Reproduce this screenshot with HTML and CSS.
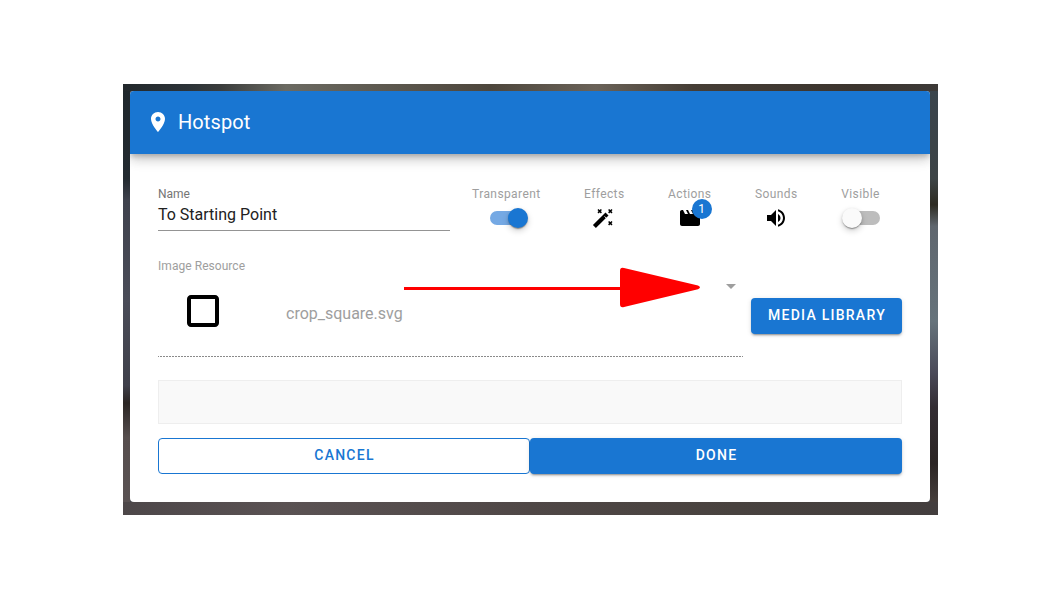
FILE: index.html
```html
<!DOCTYPE html>
<html lang="en">
<head>
<meta charset="utf-8">
<title>Hotspot</title>
<link rel="stylesheet" href="styles.css">
</head>
<body>
<div class="backdrop">
  <div class="dialog">
    <header class="header">
      <svg class="pin" viewBox="0 0 24 24"><path d="M12 2C8.13 2 5 5.13 5 9c0 5.25 7 13 7 13s7-7.75 7-13c0-3.87-3.13-7-7-7zm0 9.5c-1.38 0-2.5-1.12-2.5-2.5s1.12-2.5 2.5-2.5 2.5 1.12 2.5 2.5-1.12 2.5-2.5 2.5z"/></svg>
      <h1 class="title">Hotspot</h1>
    </header>
    <div class="body">
      <div class="top-row">
        <div class="name-field">
          <div class="name-label">Name</div>
          <div class="name-value">To Starting Point</div>
        </div>
        <div class="options">
          <div class="option">
            <div class="option-label">Transparent</div>
            <div class="option-control"><span class="toggle toggle-on"><span class="thumb"></span></span></div>
          </div>
          <div class="option">
            <div class="option-label">Effects</div>
            <div class="option-control">
              <svg class="icon" viewBox="0 0 24 24">
                <path d="M2.4 20.6 L15 8" class="wand"/>
                <path d="M12.6 10.4 L14.6 12.4" class="wand-gap"/>
                <path d="M6 3.5l3.4 3.4M9.4 3.5L6 6.9M16.6 3.5l3.4 3.4M20 3.5l-3.4 3.4M16.6 15.5l3.4 3.4M20 15.5l-3.4 3.4" class="spark"/>
              </svg>
            </div>
          </div>
          <div class="option">
            <div class="option-label">Actions</div>
            <div class="option-control">
              <span class="icon-wrap">
                <svg class="icon" viewBox="0 0 24 24"><path d="M18 4l2 4h-3l-2-4h-2l2 4h-3l-2-4H8l2 4H7L5 4H4c-1.1 0-1.99.9-1.99 2L2 18c0 1.1.9 2 2 2h16c1.1 0 2-.9 2-2V4h-4z"/></svg>
                <span class="badge">1</span>
              </span>
            </div>
          </div>
          <div class="option">
            <div class="option-label">Sounds</div>
            <div class="option-control">
              <svg class="icon" viewBox="0 0 24 24"><path d="M3 9v6h4l5 5V4L7 9H3zm13.5 3c0-1.77-1.02-3.29-2.5-4.03v8.05c1.48-.73 2.5-2.25 2.5-4.02zM14 3.23v2.06c2.89.86 5 3.54 5 6.71s-2.11 5.85-5 6.71v2.06c4.01-.91 7-4.49 7-8.77s-2.99-7.86-7-8.77z"/></svg>
            </div>
          </div>
          <div class="option">
            <div class="option-label">Visible</div>
            <div class="option-control"><span class="toggle"><span class="thumb"></span></span></div>
          </div>
        </div>
      </div>
      <div class="resource-row">
        <div class="resource">
          <div class="resource-label">Image Resource</div>
          <div class="resource-value">
            <div class="preview">
              <svg class="preview-icon" viewBox="0 0 24 24"><path d="M18 4H6c-1.1 0-2 .9-2 2v12c0 1.1.9 2 2 2h12c1.1 0 2-.9 2-2V6c0-1.1-.9-2-2-2zm0 14H6V6h12v12z"/></svg>
            </div>
            <div class="file-name">crop_square.svg</div>
          </div>
          <span class="caret"></span>
        </div>
        <button class="btn btn-primary btn-media">MEDIA LIBRARY</button>
      </div>
      <div class="empty-box"></div>
      <div class="actions">
        <button class="btn btn-outline">CANCEL</button>
        <button class="btn btn-primary">DONE</button>
      </div>
    </div>
  </div>
  <svg class="red-arrow" viewBox="0 0 300 44" width="300" height="44">
    <rect x="1" y="21" width="219" height="3" fill="#ff0000"/>
    <path d="M217 5 Q217 1 221 2 L295 19.6 Q299 21.4 295 23.2 L221 41 Q217 42 217 38 Z" fill="#ff0000"/>
  </svg>
</div>
</body>
</html>
```
FILE: styles.css
```css
* { box-sizing: border-box; }
html, body { margin: 0; padding: 0; background: #fff; }
body { font-family: Roboto, "Liberation Sans", sans-serif; height: 595px; overflow: hidden; }

.backdrop {
  position: relative;
  width: 815px;
  height: 431px;
  margin: 84px 0 0 123px;
  padding: 7px 8px 13px 7px;
  background-color: #45454a;
  background-image:
    linear-gradient(90deg, #22282c 0, #2c3338 8%, #3a3c3c 12%, #6b6a62 20%, #5f5b52 30%, #4d463c 45%, #6a6258 58%, #453d35 70%, #3b342e 90%, #3d3a38 100%),
    linear-gradient(90deg, #4d4749 0, #5a5253 20%, #4f4746 50%, #48423f 75%, #433e3e 100%),
    linear-gradient(180deg, #1f272c 0, #232a30 22%, #3f424d 27%, #4a4c58 50%, #3f404a 70%, #2b2624 74%, #564e4e 82%, #5b5354 100%),
    linear-gradient(180deg, #3a444c 0, #3d4446 22%, #2d2b22 28%, #5f666e 33%, #66737b 55%, #4a4a58 67%, #332d33 75%, #2b2524 88%, #4f4744 100%);
  background-size: 100% 7px, 100% 13px, 7px 100%, 8px 100%;
  background-position: top left, bottom left, top left, top right;
  background-repeat: no-repeat;
}

.dialog {
  width: 800px;
  height: 411px;
  background: #fff;
  border-radius: 4px;
  overflow: hidden;
}

.header {
  display: flex;
  align-items: center;
  gap: 8px;
  height: 63px;
  padding: 0 0 1px 16px;
  background: #1976d2;
  color: #fff;
  box-shadow: 0 3px 5px -1px rgba(0,0,0,.2), 0 6px 10px 0 rgba(0,0,0,.14), 0 1px 18px 0 rgba(0,0,0,.12);
  position: relative;
}
.pin { width: 24px; height: 24px; fill: #fff; }
.title { margin: 0; font-size: 20px; font-weight: 400; line-height: 24px; letter-spacing: .1px; }

.body { padding: 33px 28px 28px; }

.top-row { display: flex; justify-content: space-between; height: 44px; }
.name-field { width: 292px; border-bottom: 1px solid #949494; }
.name-label { font-size: 12px; line-height: 14px; color: #757575; }
.name-value { font-size: 16px; line-height: 24px; margin-top: 2px; color: #212121; }

.options { display: flex; padding-right: 22px; gap: 43.5px; }
.option { display: flex; flex-direction: column; align-items: center; }
.option-label { font-size: 12px; line-height: 14px; color: #9e9e9e; letter-spacing: .4px; }
.option-control { display: flex; justify-content: center; align-items: center; height: 24px; margin-top: 5px; }

.toggle { position: relative; display: block; width: 36px; height: 14px; margin-left: 3px; border-radius: 7px; background: #bdbdbd; }
.toggle-on { background: #75a9e4; }
.thumb {
  position: absolute;
  top: -3px;
  left: -2px;
  width: 20px;
  height: 20px;
  border-radius: 50%;
  background: #fafafa;
  box-shadow: 0 2px 1px -1px rgba(0,0,0,.2), 0 1px 1px 0 rgba(0,0,0,.14), 0 1px 3px 0 rgba(0,0,0,.12), 0 3px 6px rgba(0,0,0,.18);
}
.toggle-on .thumb { left: 18px; background: #1976d2; }

.icon { display: block; width: 24px; height: 24px; fill: #000; }
.icon-wrap { position: relative; display: block; width: 24px; height: 24px; }
.wand { fill: none; stroke: #000; stroke-width: 4.2; }
.wand-gap { fill: none; stroke: #fff; stroke-width: 1; }
.spark { fill: none; stroke: #000; stroke-width: 1.5; }
.badge {
  position: absolute;
  top: -7px;
  left: 14px;
  width: 20px;
  height: 20px;
  border-radius: 50%;
  background: #1976d2;
  color: #fff;
  font-size: 12px;
  line-height: 20px;
  text-align: center;
}

.resource-row { display: flex; gap: 8px; margin-top: 28px; align-items: flex-start; }
.resource {
  position: relative;
  width: 585px;
  height: 98px;
  background-image: repeating-linear-gradient(90deg, #8a8a8a 0, #8a8a8a 1px, transparent 1px, transparent 2px, #8a8a8a 2px, #8a8a8a 3px);
  background-size: 100% 1px;
  background-position: left bottom;
  background-repeat: no-repeat;
}
.resource-label { font-size: 12px; line-height: 14px; color: #9e9e9e; letter-spacing: .05px; }
.resource-value { display: flex; align-items: center; height: 48px; margin-top: 14px; }
.preview { width: 128px; padding-left: 21px; height: 48px; }
.preview-icon { display: block; width: 48px; height: 48px; fill: #000; }
.file-name { font-size: 16px; color: #9e9e9e; padding-top: 4px; }
.caret {
  position: absolute;
  top: 25px;
  right: 7px;
  width: 0;
  height: 0;
  border-left: 5px solid transparent;
  border-right: 5px solid transparent;
  border-top: 5px solid #9e9e9e;
}

.btn {
  display: block;
  height: 36px;
  padding: 0 0 2px 1px;
  border: 0;
  border-radius: 4px;
  font-family: Roboto, "Liberation Sans", sans-serif;
  font-size: 14px;
  font-weight: 500;
  letter-spacing: 1.25px;
  cursor: pointer;
}
.btn-primary {
  background: #1976d2;
  color: #fff;
  box-shadow: 0 3px 1px -2px rgba(0,0,0,.2), 0 2px 2px 0 rgba(0,0,0,.14), 0 1px 5px 0 rgba(0,0,0,.12);
}
.btn-outline { background: #fff; color: #1976d2; border: 1px solid #1976d2; }
.btn-media { width: 151px; margin-top: 39px; }

.empty-box { height: 44px; margin-top: 23px; background: #f9f9f9; border: 1px solid #eee; }

.actions { display: grid; grid-template-columns: 1fr 1fr; margin-top: 14px; }

.red-arrow { position: absolute; left: 280px; top: 182px; }
```
